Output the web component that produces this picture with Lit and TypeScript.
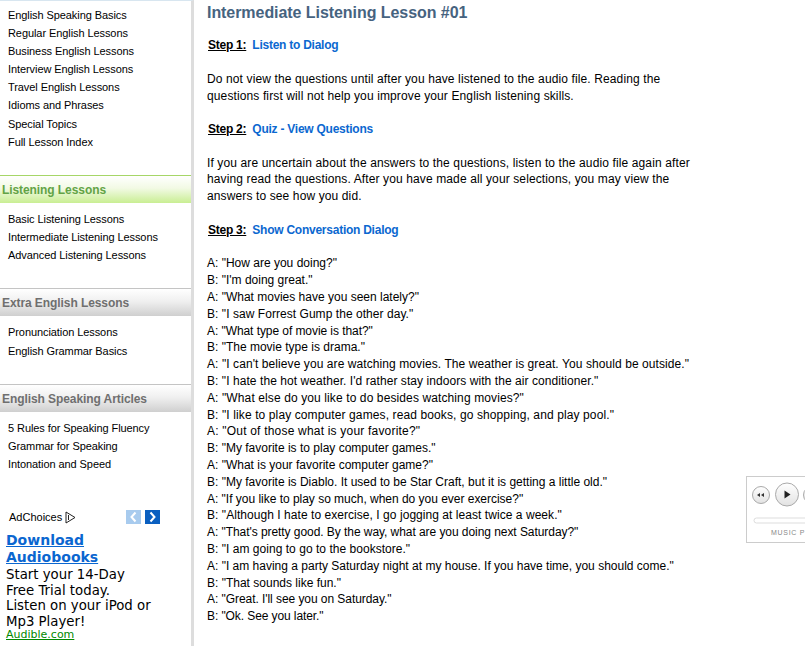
import { LitElement, html, css } from 'lit';
import { customElement } from 'lit/decorators.js';

const groups = [
  { links: ['English Speaking Basics', 'Regular English Lessons', 'Business English Lessons', 'Interview English Lessons', 'Travel English Lessons', 'Idioms and Phrases', 'Special Topics', 'Full Lesson Index'] },
  { title: 'Listening Lessons', green: true, links: ['Basic Listening Lessons', 'Intermediate Listening Lessons', 'Advanced Listening Lessons'] },
  { title: 'Extra English Lessons', roomy: true, links: ['Pronunciation Lessons', 'English Grammar Basics'] },
  { title: 'English Speaking Articles', links: ['5 Rules for Speaking Fluency', 'Grammar for Speaking', 'Intonation and Speed'] }
];

// second value: tracking per line, the reference's text runs a bit wider or narrower line by line
const dialog: [string, number][] = [
  ['A: "How are you doing?"', 0],
  ['B: "I\'m doing great."', 0],
  ['A: "What movies have you seen lately?"', 0],
  ['B: "I saw Forrest Gump the other day."', 0.05],
  ['A: "What type of movie is that?"', -0.07],
  ['B: "The movie type is drama."', 0],
  ['A: "I can\'t believe you are watching movies. The weather is great. You should be outside."', 0.08],
  ['B: "I hate the hot weather. I\'d rather stay indoors with the air conditioner."', 0.065],
  ['A: "What else do you like to do besides watching movies?"', 0.11],
  ['B: "I like to play computer games, read books, go shopping, and play pool."', 0.11],
  ['A: "Out of those what is your favorite?"', 0.2],
  ['B: "My favorite is to play computer games."', 0],
  ['A: "What is your favorite computer game?"', 0],
  ['B: "My favorite is Diablo. It used to be Star Craft, but it is getting a little old."', 0],
  ['A: "If you like to play so much, when do you ever exercise?"', -0.02],
  ['B: "Although I hate to exercise, I go jogging at least twice a week."', 0.05],
  ['A: "That\'s pretty good. By the way, what are you doing next Saturday?"', -0.06],
  ['B: "I am going to go to the bookstore."', 0.03],
  ['A: "I am having a party Saturday night at my house. If you have time, you should come."', 0],
  ['B: "That sounds like fun."', 0],
  ['A: "Great. I\'ll see you on Saturday."', -0.06],
  ['B: "Ok. See you later."', -0.09]
];

@customElement('app-root')
export class AppRoot extends LitElement {
  static styles = css`
    :host {
      display: block;
      position: relative;
      width: 805px;
      height: 646px;
      overflow: hidden;
      background: #fff;
      font-family: "Liberation Sans", Arial, sans-serif;
      color: #000;
    }
    .page { display: flex; height: 646px; }
    .side {
      width: 191px;
      flex: none;
      border-right: 3px solid #ddd;
      border-top: 1px solid #d8e6f0;
      padding-top: 5px;
    }
    .links { padding-left: 8px; }
    .links div {
      font-size: 11px;
      line-height: 18.1px;
      letter-spacing: -0.08px;
      white-space: nowrap;
    }
    .links.roomy { margin-bottom: -1px; }
    .links.roomy div { line-height: 19px; }
    .head {
      height: 27px;
      line-height: 29px;
      margin: 24px 0 7px;
      padding-left: 2px;
      border-top: 1px solid #c4c4c4;
      background: linear-gradient(#fff, #f0f0f0 45%, #cfcfcf);
      color: #6f6f6f;
      font-size: 12px;
      font-weight: bold;
      letter-spacing: -0.08px;
    }
    .head.green {
      border-top-color: #a6d667;
      background: linear-gradient(#fff, #f2fae4 45%, #c9ee93);
      color: #62a345;
    }
    .ad { padding: 36px 0 0 6px; }
    .choices { display: flex; align-items: center; height: 16px; padding-left: 3px; font-size: 11px; }
    .mark { margin-left: 3px; }
    .arrows { display: flex; gap: 4px; margin-left: 50px; }
    .arrow { width: 15px; height: 14px; display: block; }
    .ad a.title {
      display: block;
      margin-top: 7px;
      font: bold 14px/17px "DejaVu Sans", Verdana, sans-serif;
      color: #0a66d0;
      text-decoration: underline;
    }
    .ad p {
      margin: 1px 0 0;
      font: 13.3px/15.5px "DejaVu Sans", Verdana, sans-serif;
    }
    .ad a.site {
      display: block;
      font: 11px/12px "DejaVu Sans", Verdana, sans-serif;
      color: #080;
      text-decoration: underline;
    }
    main { padding: 3px 0 0 13px; font-size: 12px; flex: 1; }
    h1 {
      margin: 0 0 15px;
      font-size: 16px;
      line-height: 19px;
      color: #46637f;
      letter-spacing: -0.06px;
    }
    .step {
      font-weight: bold;
      line-height: 16.8px;
      padding-left: 1px;
      margin-bottom: 17px;
      letter-spacing: -0.25px;
    }
    .step u { color: #000; margin-right: 3px; }
    .step a { color: #0b68d0; }
    main p { margin: 0 0 16.5px; line-height: 16.8px; width: 490px; letter-spacing: 0.12px; }
    .dialog { margin-top: 1.7px; }
    .dialog div { line-height: 16.8px; white-space: nowrap; }
    .player {
      position: absolute;
      left: 746px;
      top: 476px;
      width: 70px;
      height: 65px;
      border: 1px solid #ccc;
      background: #fff;
    }
    .player svg { display: block; }
    .player span {
      position: absolute;
      left: 24px;
      top: 52px;
      font-size: 7px;
      letter-spacing: 0.7px;
      color: #888;
      white-space: nowrap;
    }
  `;

  render() {
    return html`
      <div class="page">
        <aside class="side">
          ${groups.map(g => html`
            ${g.title ? html`<div class="head ${g.green ? 'green' : ''}">${g.title}</div>` : ''}
            <div class="links ${g.roomy ? 'roomy' : ''}">${g.links.map(l => html`<div>${l}</div>`)}</div>
          `)}
          <div class="ad">
            <div class="choices">
              AdChoices
              <svg class="mark" width="11" height="13" viewBox="0 0 11 13"><path d="M1 1v11l9-5.500z M3.500 4v5" fill="none" stroke="#222"/></svg>
              <div class="arrows">
                <svg class="arrow" viewBox="0 0 15 14"><rect width="15" height="14" fill="#a8cbee"/><path d="M9.500 2.500L5.500 7l4 4.500" fill="none" stroke="#fff" stroke-width="2"/></svg>
                <svg class="arrow" viewBox="0 0 15 14"><rect width="15" height="14" fill="#0a5fc0"/><path d="M5.500 2.500l4 4.500-4 4.500" fill="none" stroke="#fff" stroke-width="2"/></svg>
              </div>
            </div>
            <a class="title">Download<br>Audiobooks</a>
            <p>Start your 14-Day<br>Free Trial today.<br>Listen on your iPod or<br>Mp3 Player!</p>
            <a class="site">Audible.com</a>
          </div>
        </aside>
        <main>
          <h1>Intermediate Listening Lesson #01</h1>
          <div class="step"><u>Step 1:</u> <a>Listen to Dialog</a></div>
          <p>Do not view the questions until after you have listened to the audio file. Reading the questions first will not help you improve your English listening skills.</p>
          <div class="step"><u>Step 2:</u> <a>Quiz - View Questions</a></div>
          <p>If you are uncertain about the answers to the questions, listen to the audio file again after having read the questions. After you have made all your selections, you may view the answers to see how you did.</p>
          <div class="step"><u>Step 3:</u> <a>Show Conversation Dialog</a></div>
          <div class="dialog">${dialog.map(([t, ls]) => html`<div style="letter-spacing:${ls}px">${t}</div>`)}</div>
        </main>
      </div>
      <div class="player">
        <svg width="70" height="65" viewBox="0 0 70 65">
          <defs>
            <linearGradient id="b" x1="0" y1="0" x2="0" y2="1"><stop offset="0" stop-color="#fff"/><stop offset="1" stop-color="#e2e2e2"/></linearGradient>
          </defs>
          <circle cx="14" cy="18" r="8.500" fill="url(#b)" stroke="#aaa"/>
          <path d="M13 16v4l-3-2zM17 16v4l-3-2z" fill="#333"/>
          <circle cx="40" cy="17.500" r="11.500" fill="url(#b)" stroke="#aaa"/>
          <path d="M37.500 13.500v8l6-4z" fill="#222"/>
          <circle cx="65" cy="18" r="8.500" fill="url(#b)" stroke="#aaa"/>
          <rect x="7" y="41" width="70" height="5" rx="2.500" fill="#fff" stroke="#ddd"/>
        </svg>
        <span>MUSIC P</span>
      </div>
    `;
  }
}
